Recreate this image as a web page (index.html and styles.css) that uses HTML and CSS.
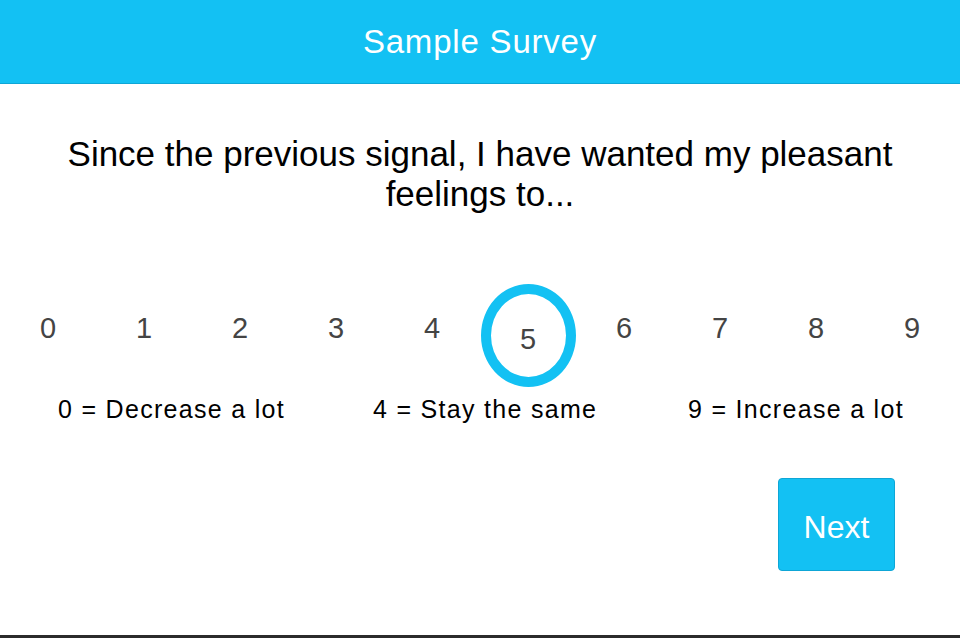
FILE: index.html
```html
<!DOCTYPE html>
<html>
<head>
<meta charset="utf-8">
<link rel="stylesheet" href="styles.css">
</head>
<body>
<div class="page">
  <header class="topbar">Sample Survey</header>
  <main class="content">
    <h1 class="question">Since the previous signal, I have wanted my pleasant feelings to...</h1>
    <div class="scale">
      <div class="cell"><span class="num">0</span></div>
      <div class="cell"><span class="num">1</span></div>
      <div class="cell"><span class="num">2</span></div>
      <div class="cell"><span class="num">3</span></div>
      <div class="cell"><span class="num">4</span></div>
      <div class="cell"><span class="num selected">5</span></div>
      <div class="cell"><span class="num">6</span></div>
      <div class="cell"><span class="num">7</span></div>
      <div class="cell"><span class="num">8</span></div>
      <div class="cell"><span class="num">9</span></div>
    </div>
    <div class="legend">
      <span class="legend-item">0 = Decrease a lot</span>
      <span class="legend-item">4 = Stay the same</span>
      <span class="legend-item">9 = Increase a lot</span>
    </div>
    <div class="actions">
      <button class="next">Next</button>
    </div>
  </main>
</div>
</body>
</html>
```
FILE: styles.css
```css
html, body {
  margin: 0;
  padding: 0;
  background: #ffffff;
}
body {
  font-family: "Liberation Sans", Arial, sans-serif;
}
.page {
  height: 638px;
  box-sizing: border-box;
  border-bottom: 3px solid #2b2b2b;
  display: flex;
  flex-direction: column;
}
.topbar {
  height: 83px;
  background: #13c1f3;
  border-bottom: 1px solid #0ea6d6;
  color: #ffffff;
  font-size: 33px;
  letter-spacing: 0.8px;
  line-height: 83px;
  text-align: center;
}
.content {
  flex: 1;
  display: flex;
  flex-direction: column;
}
.question {
  margin: 50px 40px 0;
  font-size: 35px;
  font-weight: normal;
  line-height: 40px;
  text-align: center;
  color: #000000;
}
.scale {
  display: grid;
  grid-template-columns: repeat(10, 96px);
  align-items: start;
  margin-top: 70px;
}
.cell {
  display: flex;
  justify-content: center;
}
.num {
  display: inline-block;
  font-size: 29px;
  line-height: 32px;
  color: #444444;
  margin-top: 28px;
  text-align: center;
}
.num.selected {
  margin-top: 0;
  width: 75px;
  box-sizing: content-box;
  padding-top: 29px;
  height: 54px;
  border: 10px solid #13c1f3;
  border-radius: 50%;
}
.legend {
  display: grid;
  grid-template-columns: repeat(3, 315px);
  padding-left: 58px;
  margin-top: 7px;
}
.legend-item {
  font-size: 25px;
  letter-spacing: 1.3px;
  line-height: 30px;
  color: #000000;
}
.actions {
  display: flex;
  justify-content: flex-end;
  padding-right: 65px;
  margin-top: 54px;
}
.next {
  width: 117px;
  height: 93px;
  box-sizing: border-box;
  background: #13c1f3;
  border: 1px solid #0ea6d6;
  border-radius: 4px;
  color: #ffffff;
  font-family: "Liberation Sans", Arial, sans-serif;
  font-size: 32px;
  padding: 5px 0 0;
}
```
